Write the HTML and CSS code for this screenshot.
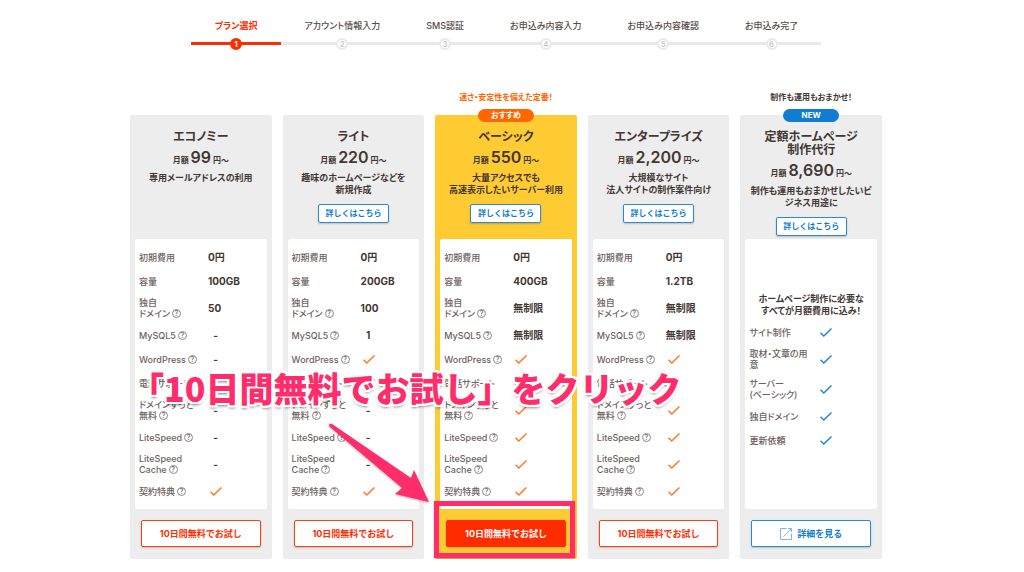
FILE: index.html
```html
<!DOCTYPE html>
<html lang="ja">
<head>
    <meta charset="UTF-8">
    <meta name="viewport" content="width=device-width, initial-scale=1.0">
    <title>プラン選択</title>
    <link rel="stylesheet" href="styles.css">
</head>
<body>
    <svg class="defs" aria-hidden="true">
        <symbol id="check" viewBox="0 0 12 9">
            <path d="M0.5 4.8 L3.8 8 L11.5 0.6" fill="none" stroke="currentColor" stroke-width="1.4"/>
        </symbol>
    </svg>

    <div class="page">
        <!-- Steps -->
        <ol class="steps">
            <li class="step current">プラン選択<span class="num">1</span></li>
            <li class="step">アカウント情報入力<span class="num">2</span></li>
            <li class="step">SMS認証<span class="num">3</span></li>
            <li class="step">お申込み内容入力<span class="num">4</span></li>
            <li class="step">お申込み内容確認<span class="num">5</span></li>
            <li class="step">お申込み完了<span class="num">6</span></li>
        </ol>

        <!-- Plans -->
        <div class="plans">
            <section class="plan">
                <p class="catch"></p>
                <div class="card">
                    <div class="head">
                        <h2>エコノミー</h2>
                        <p class="price">月額 <strong>99</strong> 円〜</p>
                        <p class="desc">専用メールアドレスの利用</p>
                    </div>
                    <div class="spec">
                        <table>
                            <tr><th>初期費用</th><td>0円</td></tr>
                            <tr><th>容量</th><td>100GB</td></tr>
                            <tr><th>独自<br>ドメイン<button class="help">?</button></th><td>50</td></tr>
                            <tr><th>MySQL5<button class="help">?</button></th><td><span class="mark">-</span></td></tr>
                            <tr><th>WordPress<button class="help">?</button></th><td><span class="mark">-</span></td></tr>
                            <tr><th>電話サポート</th><td><span class="mark">-</span></td></tr>
                            <tr><th>ドメインずっと<br>無料<button class="help">?</button></th><td><span class="mark">-</span></td></tr>
                            <tr><th>LiteSpeed<button class="help">?</button></th><td><span class="mark">-</span></td></tr>
                            <tr><th>LiteSpeed<br>Cache<button class="help">?</button></th><td><span class="mark">-</span></td></tr>
                            <tr><th>契約特典<button class="help">?</button></th><td><svg class="check"><use href="#check"/></svg></td></tr>
                        </table>
                    </div>
                    <div class="foot"><button class="cta">10日間無料でお試し</button></div>
                </div>
            </section>

            <section class="plan">
                <p class="catch"></p>
                <div class="card">
                    <div class="head">
                        <h2>ライト</h2>
                        <p class="price">月額 <strong>220</strong> 円〜</p>
                        <p class="desc">趣味のホームページなどを<br>新規作成</p>
                        <a class="more" href="#">詳しくはこちら</a>
                    </div>
                    <div class="spec">
                        <table>
                            <tr><th>初期費用</th><td>0円</td></tr>
                            <tr><th>容量</th><td>200GB</td></tr>
                            <tr><th>独自<br>ドメイン<button class="help">?</button></th><td>100</td></tr>
                            <tr><th>MySQL5<button class="help">?</button></th><td><span class="mark">1</span></td></tr>
                            <tr><th>WordPress<button class="help">?</button></th><td><svg class="check"><use href="#check"/></svg></td></tr>
                            <tr><th>電話サポート</th><td><svg class="check"><use href="#check"/></svg></td></tr>
                            <tr><th>ドメインずっと<br>無料<button class="help">?</button></th><td><span class="mark">-</span></td></tr>
                            <tr><th>LiteSpeed<button class="help">?</button></th><td><span class="mark">-</span></td></tr>
                            <tr><th>LiteSpeed<br>Cache<button class="help">?</button></th><td><span class="mark">-</span></td></tr>
                            <tr><th>契約特典<button class="help">?</button></th><td><svg class="check"><use href="#check"/></svg></td></tr>
                        </table>
                    </div>
                    <div class="foot"><button class="cta">10日間無料でお試し</button></div>
                </div>
            </section>

            <section class="plan recommend">
                <p class="catch">速さ・安定性を備えた定番！</p>
                <div class="card">
                    <span class="badge">おすすめ</span>
                    <div class="head">
                        <h2>ベーシック</h2>
                        <p class="price">月額 <strong>550</strong> 円〜</p>
                        <p class="desc">大量アクセスでも<br>高速表示したいサーバー利用</p>
                        <a class="more" href="#">詳しくはこちら</a>
                    </div>
                    <div class="spec">
                        <table>
                            <tr><th>初期費用</th><td>0円</td></tr>
                            <tr><th>容量</th><td>400GB</td></tr>
                            <tr><th>独自<br>ドメイン<button class="help">?</button></th><td>無制限</td></tr>
                            <tr><th>MySQL5<button class="help">?</button></th><td>無制限</td></tr>
                            <tr><th>WordPress<button class="help">?</button></th><td><svg class="check"><use href="#check"/></svg></td></tr>
                            <tr><th>電話サポート</th><td><svg class="check"><use href="#check"/></svg></td></tr>
                            <tr><th>ドメインずっと<br>無料<button class="help">?</button></th><td><svg class="check"><use href="#check"/></svg></td></tr>
                            <tr><th>LiteSpeed<button class="help">?</button></th><td><svg class="check"><use href="#check"/></svg></td></tr>
                            <tr><th>LiteSpeed<br>Cache<button class="help">?</button></th><td><svg class="check"><use href="#check"/></svg></td></tr>
                            <tr><th>契約特典<button class="help">?</button></th><td><svg class="check"><use href="#check"/></svg></td></tr>
                        </table>
                    </div>
                    <div class="foot"><button class="cta">10日間無料でお試し</button></div>
                    <div class="highlight"></div>
                </div>
            </section>

            <section class="plan">
                <p class="catch"></p>
                <div class="card">
                    <div class="head">
                        <h2>エンタープライズ</h2>
                        <p class="price">月額 <strong>2,200</strong> 円〜</p>
                        <p class="desc">大規模なサイト<br>法人サイトの制作案件向け</p>
                        <a class="more" href="#">詳しくはこちら</a>
                    </div>
                    <div class="spec">
                        <table>
                            <tr><th>初期費用</th><td>0円</td></tr>
                            <tr><th>容量</th><td>1.2TB</td></tr>
                            <tr><th>独自<br>ドメイン<button class="help">?</button></th><td>無制限</td></tr>
                            <tr><th>MySQL5<button class="help">?</button></th><td>無制限</td></tr>
                            <tr><th>WordPress<button class="help">?</button></th><td><svg class="check"><use href="#check"/></svg></td></tr>
                            <tr><th>電話サポート</th><td><svg class="check"><use href="#check"/></svg></td></tr>
                            <tr><th>ドメインずっと<br>無料<button class="help">?</button></th><td><svg class="check"><use href="#check"/></svg></td></tr>
                            <tr><th>LiteSpeed<button class="help">?</button></th><td><svg class="check"><use href="#check"/></svg></td></tr>
                            <tr><th>LiteSpeed<br>Cache<button class="help">?</button></th><td><svg class="check"><use href="#check"/></svg></td></tr>
                            <tr><th>契約特典<button class="help">?</button></th><td><svg class="check"><use href="#check"/></svg></td></tr>
                        </table>
                    </div>
                    <div class="foot"><button class="cta">10日間無料でお試し</button></div>
                </div>
            </section>

            <section class="plan agency">
                <p class="catch">制作も運用もおまかせ！</p>
                <div class="card">
                    <span class="badge">NEW</span>
                    <div class="head">
                        <h2>定額ホームページ<br>制作代行</h2>
                        <p class="price">月額 <strong>8,690</strong> 円〜</p>
                        <p class="desc">制作も運用もおまかせしたいビ<br>ジネス用途に</p>
                        <a class="more" href="#">詳しくはこちら</a>
                    </div>
                    <div class="spec">
                        <p class="lead">ホームページ制作に必要な<br>すべてが月額費用に込み！</p>
                        <table>
                            <tr><th>サイト制作</th><td><svg class="check"><use href="#check"/></svg></td></tr>
                            <tr><th>取材・文章の用<br>意</th><td><svg class="check"><use href="#check"/></svg></td></tr>
                            <tr><th>サーバー<br>(ベーシック)</th><td><svg class="check"><use href="#check"/></svg></td></tr>
                            <tr><th>独自ドメイン</th><td><svg class="check"><use href="#check"/></svg></td></tr>
                            <tr><th>更新依頼</th><td><svg class="check"><use href="#check"/></svg></td></tr>
                        </table>
                    </div>
                    <div class="foot">
                        <a class="cta" href="#">
                            <svg class="ext" viewBox="0 0 12 12" fill="none" stroke="currentColor">
                                <path d="M6.5 0.5 H0.5 V11.5 H11.5 V5.5 M3.5 8.5 L11 1 M8 0.5 H11.5 V4"/>
                            </svg>
                            詳細を見る
                        </a>
                    </div>
                </div>
            </section>

            <!-- Guide -->
            <p class="guide">「10日間無料でお試し」をクリック</p>
            <svg class="arrow" viewBox="0 0 104 84">
                <path d="M4 4 Q2 3 1 5 Q1 6 2 7 L74 68 L67 74 L101 82 L86 50 L83 58 Z" fill="#ff2d6b"/>
            </svg>
        </div>
    </div>
</body>
</html>
```
FILE: styles.css
```css
* {
    box-sizing: border-box;
}
body {
    margin: 0;
    padding: 20px 12px 0 0;
    background: #fff;
    color: #433733;
    font-family: Inter, "Noto Sans CJK JP", sans-serif;
    font-size: 9px;
    line-height: 12px;
    font-feature-settings: "palt";
}
h2, p, ol {
    margin: 0;
    padding: 0;
}
a {
    text-decoration: none;
}
button {
    font: inherit;
    cursor: pointer;
}
.defs {
    position: absolute;
    width: 0;
    height: 0;
}
.page {
    max-width: 752px;
    margin: 0 auto;
}

/* steps */
.steps {
    display: flex;
    justify-content: center;
    list-style: none;
}
.step {
    display: flex;
    flex-direction: column;
    align-items: center;
    gap: 6px;
    padding: 0 23px;
    font-weight: 500;
    color: #5a4d49;
    background: linear-gradient(#e9e9e9, #e9e9e9) 0 22px / 100% 3px no-repeat;
}
.step:first-child {
    padding: 0 24px;
}
.num {
    width: 12px;
    height: 12px;
    border: 2px solid #e9e9e9;
    border-radius: 50%;
    background: #fff;
    color: #c4c4c4;
    font-size: 8px;
    line-height: 8px;
    text-align: center;
}
.current {
    color: #ff2c00;
    font-weight: 700;
    background-image: linear-gradient(#ff2c00, #ff2c00);
}
.current .num {
    border-color: #ff2c00;
    background: #ff2c00;
    color: #fff;
}

/* plans */
.plans {
    position: relative;
    display: grid;
    grid-template-columns: repeat(5, 1fr);
    gap: 11px;
    margin-top: 41px;
}
.plan {
    display: flex;
    flex-direction: column;
    min-width: 0;
}
.catch {
    height: 24px;
    font-size: 8px;
    font-weight: 700;
    text-align: center;
}
.recommend .catch {
    color: #ff6600;
}
.card {
    position: relative;
    flex: 1;
    display: flex;
    flex-direction: column;
    padding: 0 5px;
    border-radius: 2px;
    background: #ededed;
}
.recommend .card {
    background: #ffcb32;
}
.badge {
    position: absolute;
    top: -6px;
    left: 50%;
    width: 56px;
    margin-left: -28px;
    border-radius: 7px;
    background: #ff6600;
    color: #fff;
    font-size: 8px;
    font-weight: 700;
    line-height: 13px;
    text-align: center;
}
.agency .badge {
    background: #117dd0;
}
.head {
    min-height: 124px;
    padding: 15px 0 3px;
    text-align: center;
    font-weight: 700;
    white-space: nowrap;
}
h2 {
    font-size: 12px;
    line-height: 13px;
}
.price {
    height: 20px;
    margin: 4px 0 5px;
    font-size: 8px;
    line-height: 20px;
}
.price strong {
    font-size: 16px;
    font-weight: 600;
}
.more {
    display: block;
    width: 71px;
    margin: 8px auto 0;
    border: 1px solid #2a8ad6;
    border-radius: 2px;
    background: #fff;
    box-shadow: 0 1px 2px rgba(0, 0, 0, 0.2);
    color: #117dd0;
    font-size: 8px;
    line-height: 17px;
    font-feature-settings: normal;
}
.spec {
    flex: 1;
    display: flex;
    flex-direction: column;
    justify-content: center;
    padding: 6px 4px;
    border-radius: 2px;
    background: #fff;
}
.lead {
    margin-bottom: 3px;
    font-weight: 700;
    text-align: center;
    white-space: nowrap;
}
.agency .spec {
    padding-bottom: 9px;
}
table {
    width: 100%;
    border-collapse: collapse;
    table-layout: fixed;
}
tr {
    height: 24px;
}
th, td {
    padding: 4px 0;
    line-height: 11px;
    text-align: left;
    vertical-align: middle;
    white-space: nowrap;
}
th {
    width: 69px;
    font-weight: 500;
    color: #6e625e;
}
td {
    font-size: 10px;
    font-weight: 700;
}
.help {
    width: 9px;
    height: 9px;
    margin-left: 2px;
    padding: 0;
    border: 1px solid #8f8683;
    border-radius: 50%;
    background: none;
    color: #756a66;
    font-size: 7px;
    line-height: 7px;
    vertical-align: 1px;
}
.mark {
    display: inline-block;
    width: 15px;
    text-align: center;
}
.check {
    display: block;
    width: 12px;
    height: 9px;
    margin-left: 2px;
    color: #ff7420;
}
.agency .check {
    color: #1d84d4;
}
.foot {
    padding: 11px 6px 12px;
}
.cta {
    display: flex;
    align-items: center;
    justify-content: center;
    gap: 5px;
    width: 100%;
    height: 27px;
    border: 1px solid #ff3c12;
    border-radius: 2px;
    background: #fff;
    box-shadow: 0 1px 2px rgba(0, 0, 0, 0.2);
    color: #ff2c00;
    font-weight: 700;
    font-feature-settings: normal;
}
.recommend .cta {
    border-color: #ff2c00;
    background: #ff2c00;
    color: #fff;
}
.agency .cta {
    border-color: #2a8ad6;
    color: #117dd0;
}
.ext {
    width: 12px;
    height: 12px;
    color: #7db5e3;
}

/* guide on top of the plans */
.highlight {
    position: absolute;
    right: 2px;
    bottom: 1px;
    left: -1px;
    height: 57px;
    border: 5px solid #ff2d6b;
    box-shadow: 0 1px 2px rgba(0, 0, 0, 0.3);
    pointer-events: none;
}
.guide {
    position: absolute;
    top: 277px;
    left: 0;
    color: #ff2d6b;
    font-family: "Noto Sans CJK JP", sans-serif;
    font-size: 34px;
    font-weight: 900;
    line-height: 40px;
    font-feature-settings: normal;
    white-space: nowrap;
    text-shadow: 2px 0 #fff, -2px 0 #fff, 0 2px #fff, 0 -2px #fff,
        2px 2px #fff, -2px 2px #fff, 2px -2px #fff, -2px -2px #fff,
        0 3px 3px rgba(0, 0, 0, 0.5);
    pointer-events: none;
}
.arrow {
    position: absolute;
    top: 329px;
    left: 198px;
    width: 104px;
    height: 84px;
    filter: drop-shadow(0 1px 1px rgba(0, 0, 0, 0.3));
    pointer-events: none;
}
```
